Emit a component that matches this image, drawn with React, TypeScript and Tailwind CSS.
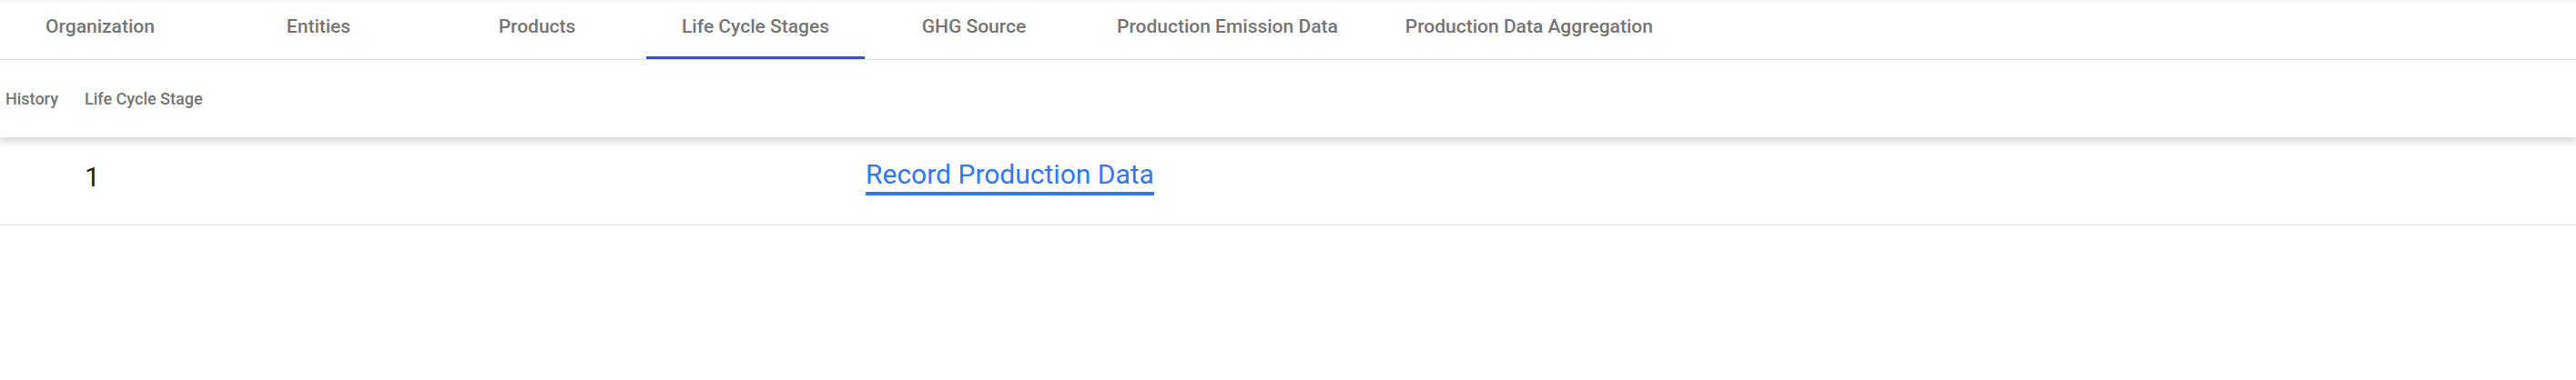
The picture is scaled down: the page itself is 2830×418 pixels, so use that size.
import React from "react";

const tabs = [
  { label: "Organization", w: "w-[240px] -ml-[10px]" },
  { label: "Entities", w: "w-[240px]" },
  { label: "Products", w: "w-[240px]" },
  { label: "Life Cycle Stages", w: "w-[240px]", active: true },
  { label: "GHG Source", w: "w-[240px]" },
  { label: "Production Emission Data", w: "px-[37px]" },
  { label: "Production Data Aggregation", w: "px-[37px]" },
];

export default function App() {
  return (
    <div
      className="w-full min-h-[418px] bg-white overflow-hidden"
      style={{ fontFamily: "Roboto, 'Liberation Sans', sans-serif" }}
    >
      <div className="flex h-[66px] border-b border-[#e0e0e0] shadow-[inset_0_3px_3px_-2px_rgba(0,0,0,0.07)]">
        {tabs.map((t) => (
          <div
            key={t.label}
            className={`relative flex justify-center shrink-0 pt-[17px] ${t.w}`}
          >
            <span className="text-[21px] leading-[24px] font-medium text-[#757575] whitespace-nowrap">
              {t.label}
            </span>
            {t.active && (
              <div className="absolute left-0 right-0 bottom-0 h-[3px] bg-[#3f51b5]" />
            )}
          </div>
        ))}
      </div>

      <div className="relative z-10 flex items-center h-[85px] bg-white shadow-[0_5px_8px_rgba(0,0,0,0.16)]">
        <div className="w-[93px] pl-[6px] text-[18px] leading-[20px] font-medium text-[#757575]">
          History
        </div>
        <div className="text-[18px] leading-[20px] font-medium text-[#757575]">
          Life Cycle Stage
        </div>
      </div>

      <div className="flex h-[97px] border-b border-[#e0e0e0] bg-white">
        <div className="w-[93px]" />
        <div className="w-[858px] pt-[26px]">
          <span className="text-[30px] leading-[36px] text-[#212121]">1</span>
        </div>
        <div className="flex-1 pt-[23px]">
          <a
            href="#"
            className="inline-block text-[30px] leading-[36px] pb-[1px] text-[#2f78f2] border-b-4 border-[#2f78f2]"
          >
            Record Production Data
          </a>
        </div>
      </div>
    </div>
  );
}
